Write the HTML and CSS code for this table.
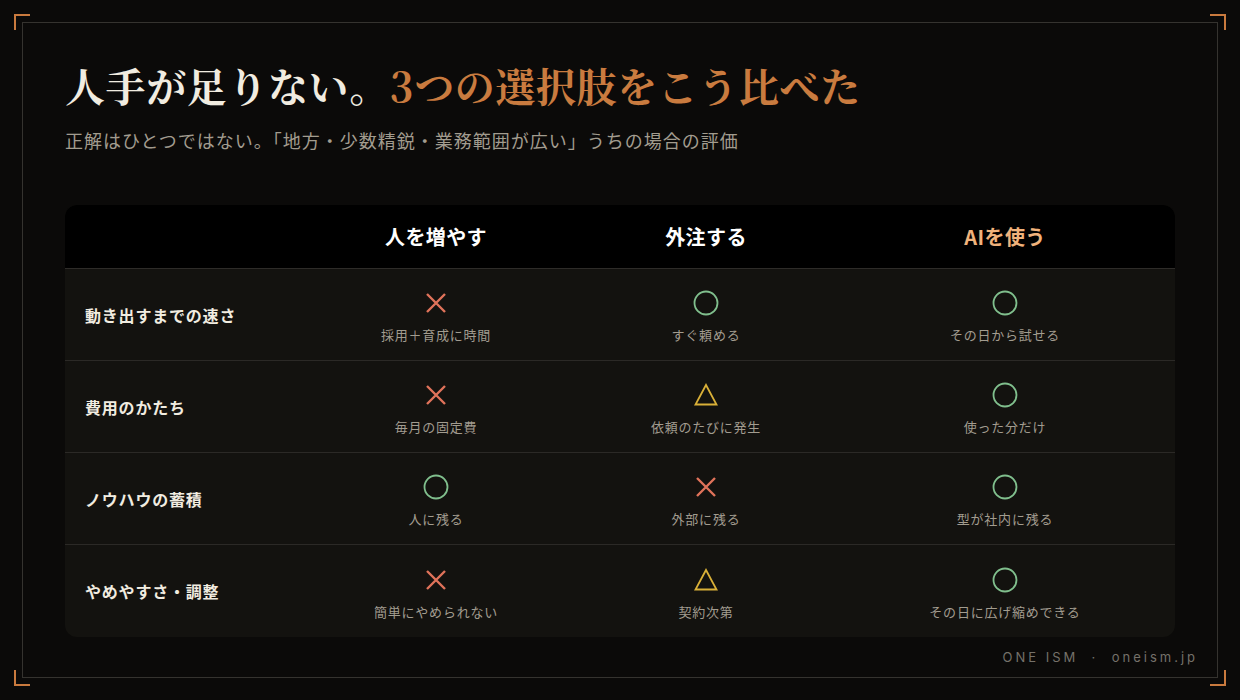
FILE: index.html
```html
<!DOCTYPE html>
<html lang="ja">
<head>
<meta charset="utf-8">
<title>3つの選択肢の比較</title>
<link rel="stylesheet" href="styles.css">
</head>
<body>
<div class="page">
  <span class="corner corner-tl"></span>
  <span class="corner corner-tr"></span>
  <span class="corner corner-bl"></span>
  <span class="corner corner-br"></span>
  <div class="frame">
    <h1 class="title">人手が足りない。<span class="accent">3つの選択肢をこう比べた</span></h1>
    <p class="subtitle">正解はひとつではない。「地方・少数精鋭・業務範囲が広い」うちの場合の評価</p>

    <div class="table">
      <div class="row head">
        <div class="cell label"></div>
        <div class="cell hcell">人を増やす</div>
        <div class="cell hcell">外注する</div>
        <div class="cell hcell ai">AIを使う</div>
      </div>

      <div class="row">
        <div class="cell label">動き出すまでの速さ</div>
        <div class="cell mark"><svg class="ic" viewBox="0 0 26 26"><path d="M4 4 L22 22 M22 4 L4 22" class="x"/></svg><span class="note">採用＋育成に時間</span></div>
        <div class="cell mark"><svg class="ic" viewBox="0 0 26 26"><circle cx="13" cy="13" r="11.5" class="o"/></svg><span class="note">すぐ頼める</span></div>
        <div class="cell mark"><svg class="ic" viewBox="0 0 26 26"><circle cx="13" cy="13" r="11.5" class="o"/></svg><span class="note">その日から試せる</span></div>
      </div>

      <div class="row">
        <div class="cell label">費用のかたち</div>
        <div class="cell mark"><svg class="ic" viewBox="0 0 26 26"><path d="M4 4 L22 22 M22 4 L4 22" class="x"/></svg><span class="note">毎月の固定費</span></div>
        <div class="cell mark"><svg class="ic" viewBox="0 0 26 26"><path d="M13 3 L23.5 22.5 L2.5 22.5 Z" class="t"/></svg><span class="note">依頼のたびに発生</span></div>
        <div class="cell mark"><svg class="ic" viewBox="0 0 26 26"><circle cx="13" cy="13" r="11.5" class="o"/></svg><span class="note">使った分だけ</span></div>
      </div>

      <div class="row">
        <div class="cell label">ノウハウの蓄積</div>
        <div class="cell mark"><svg class="ic" viewBox="0 0 26 26"><circle cx="13" cy="13" r="11.5" class="o"/></svg><span class="note">人に残る</span></div>
        <div class="cell mark"><svg class="ic" viewBox="0 0 26 26"><path d="M4 4 L22 22 M22 4 L4 22" class="x"/></svg><span class="note">外部に残る</span></div>
        <div class="cell mark"><svg class="ic" viewBox="0 0 26 26"><circle cx="13" cy="13" r="11.5" class="o"/></svg><span class="note">型が社内に残る</span></div>
      </div>

      <div class="row last">
        <div class="cell label">やめやすさ・調整</div>
        <div class="cell mark"><svg class="ic" viewBox="0 0 26 26"><path d="M4 4 L22 22 M22 4 L4 22" class="x"/></svg><span class="note">簡単にやめられない</span></div>
        <div class="cell mark"><svg class="ic" viewBox="0 0 26 26"><path d="M13 3 L23.5 22.5 L2.5 22.5 Z" class="t"/></svg><span class="note">契約次第</span></div>
        <div class="cell mark"><svg class="ic" viewBox="0 0 26 26"><circle cx="13" cy="13" r="11.5" class="o"/></svg><span class="note">その日に広げ縮めできる</span></div>
      </div>
    </div>

    <div class="footer">ONE ISM&nbsp;&nbsp;·&nbsp;&nbsp;oneism.jp</div>
  </div>
</div>
</body>
</html>
```

FILE: styles.css
```css
html, body {
  margin: 0;
  padding: 0;
  background: #0b0a09;
}

body {
  font-family: "Noto Sans CJK JP", "Noto Sans", sans-serif;
  color: #f1ece0;
}

.page {
  position: relative;
  width: 1240px;
  height: 700px;
  padding: 22px;
  box-sizing: border-box;
}

.corner {
  position: absolute;
  width: 14px;
  height: 14px;
  border-color: #c97a3e;
  border-style: solid;
  border-width: 0;
}
.corner-tl { top: 14px; left: 14px; border-top-width: 2px; border-left-width: 2px; }
.corner-tr { top: 14px; right: 14px; border-top-width: 2px; border-right-width: 2px; }
.corner-bl { bottom: 14px; left: 14px; border-bottom-width: 2px; border-left-width: 2px; }
.corner-br { bottom: 14px; right: 14px; border-bottom-width: 2px; border-right-width: 2px; }

.frame {
  height: 100%;
  box-sizing: border-box;
  border: 1px solid #35332f;
  padding: 38px 42px 0 42px;
  display: flex;
  flex-direction: column;
}

.title {
  margin: 0;
  font-family: "Noto Serif CJK JP", "Liberation Serif", "Noto Sans CJK JP", serif;
  font-weight: 700;
  font-size: 40px;
  line-height: 48px;
  letter-spacing: 0.015em;
  color: #f1ece0;
}
.title .accent {
  color: #c97b3f;
}

.subtitle {
  margin: 18px 0 0 0;
  font-size: 18px;
  line-height: 26px;
  letter-spacing: 1px;
  color: #a29c8f;
}

.table {
  margin-top: 52px;
  background: #13120f;
  border-radius: 12px;
  overflow: hidden;
}

.row {
  display: grid;
  grid-template-columns: 230px 282px 258px 340px;
  height: 92px;
  border-bottom: 1px solid #2b2926;
  box-sizing: border-box;
}
.row.last {
  border-bottom: none;
}
.row.head {
  height: 64px;
  background: #000;
  border-bottom: 1px solid #2e2c29;
}

.cell {
  display: flex;
  align-items: center;
  justify-content: center;
}

.hcell {
  font-size: 20px;
  font-weight: 700;
  color: #ffffff;
  letter-spacing: 0.02em;
}
.hcell.ai {
  color: #f0b27b;
}

.label {
  justify-content: flex-start;
  padding-left: 20px;
  font-size: 16px;
  font-weight: 700;
  letter-spacing: 0.05em;
  color: #f1ece0;
}

.mark {
  flex-direction: column;
  gap: 9px;
  padding-top: 6px;
}

.ic {
  width: 26px;
  height: 26px;
  display: block;
}
.ic .x {
  stroke: #e0735a;
  stroke-width: 2.4;
  fill: none;
  stroke-linecap: butt;
}
.ic .o {
  stroke: #80bf8d;
  stroke-width: 1.8;
  fill: none;
}
.ic .t {
  stroke: #d9b038;
  stroke-width: 1.8;
  fill: none;
  stroke-linejoin: miter;
}

.note {
  font-size: 13px;
  line-height: 20px;
  letter-spacing: 0.06em;
  color: #a29c8f;
}

.footer {
  align-self: flex-end;
  margin-top: 12px;
  margin-right: -23px;
  font-family: "Inter", "Noto Sans", sans-serif;
  font-size: 13px;
  line-height: 16px;
  letter-spacing: 3px;
  color: #75716a;
}
```
